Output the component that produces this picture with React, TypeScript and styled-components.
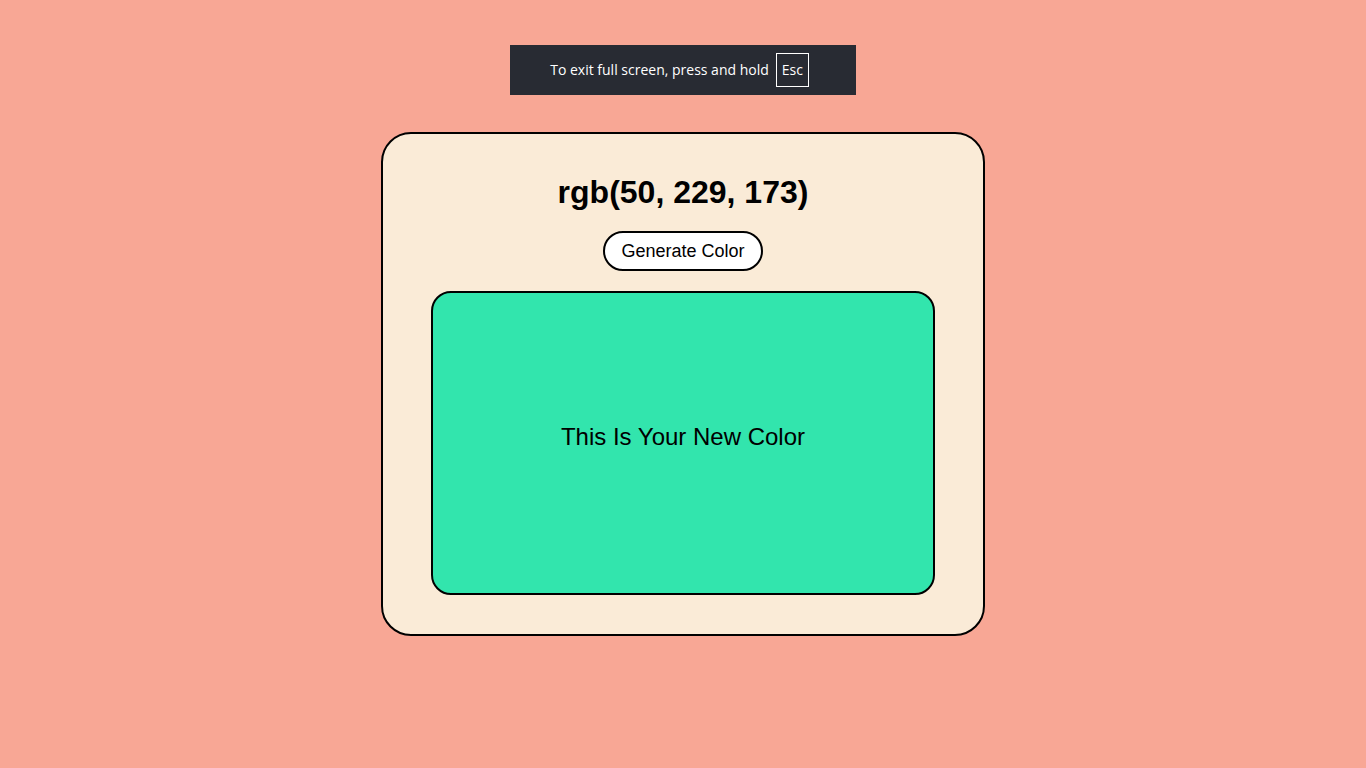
import React from "react";
import styled, { createGlobalStyle } from "styled-components";

const Global = createGlobalStyle`
  html, body { margin: 0; padding: 0; }
  body {
    background: #f8a795;
    font-family: "Liberation Sans", Arial, sans-serif;
    min-height: 768px;
  }
`;

const Page = styled.div`
  display: flex;
  justify-content: center;
  padding-top: 132px;
`;

const Toast = styled.div`
  position: fixed;
  top: 45px;
  left: 510px;
  width: 346px;
  height: 50px;
  background: #282b33;
  color: #ffffff;
  display: flex;
  align-items: center;
  justify-content: center;
  gap: 7px;
  font-family: "Open Sans", "Noto Sans", sans-serif;
  font-size: 14px;
  padding: 0 7px 2px 0;
  box-sizing: border-box;
`;

const Key = styled.span`
  display: inline-flex;
  align-items: center;
  justify-content: center;
  width: 31px;
  height: 32px;
  margin-top: 2px;
  padding-bottom: 2px;
  box-sizing: content-box;
  height: 30px;
  border: 1px solid #ffffff;
  font-size: 14px;
`;

const Card = styled.div`
  width: 504px;
  border: 2px solid #000;
  border-radius: 30px;
  background: #faebd7;
  padding: 40px 48px 39px;
  box-sizing: content-box;
  display: flex;
  flex-direction: column;
  align-items: center;
`;

const Title = styled.h1`
  margin: 0;
  font-size: 32px;
  line-height: 37px;
  font-weight: 700;
  color: #000;
`;

const Button = styled.button`
  margin-top: 20px;
  height: 40px;
  width: 160px;
  border: 2px solid #000;
  border-radius: 20px;
  background: #ffffff;
  font-family: "Liberation Sans", Arial, sans-serif;
  font-size: 18px;
  color: #000;
  padding: 0;
  cursor: pointer;
`;

const Swatch = styled.div<{ $color: string }>`
  margin-top: 20px;
  width: 500px;
  height: 288px;
  padding-bottom: 12px;
  box-sizing: content-box;
  border: 2px solid #000;
  border-radius: 20px;
  background: ${(p) => p.$color};
  display: flex;
  align-items: center;
  justify-content: center;
`;

const SwatchText = styled.p`
  margin: 0;
  font-size: 24px;
  color: #000;
`;

export default function App() {
  const color = "rgb(50, 229, 173)";
  return (
    <>
      <Global />
      <Page>
        <Card>
          <Title>{color}</Title>
          <Button>Generate Color</Button>
          <Swatch $color={color}>
            <SwatchText>This Is Your New Color</SwatchText>
          </Swatch>
        </Card>
      </Page>
      <Toast>
        <span>To exit full screen, press and hold</span>
        <Key>Esc</Key>
      </Toast>
    </>
  );
}
